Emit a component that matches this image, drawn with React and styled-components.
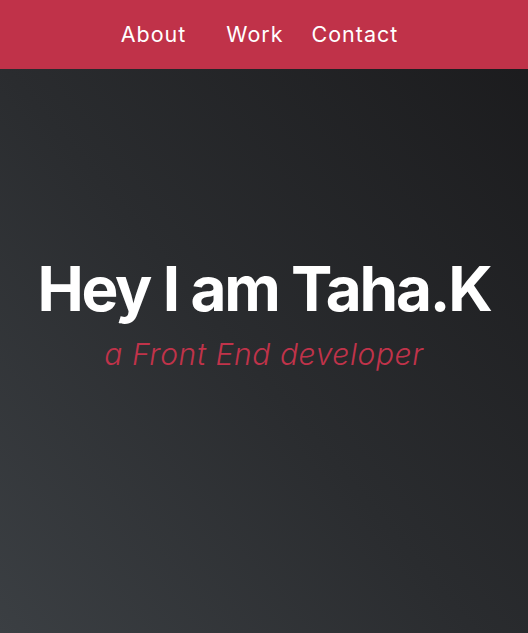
import React from 'react';
import styled, { createGlobalStyle } from 'styled-components';

const GlobalStyle = createGlobalStyle`
  * {
    box-sizing: border-box;
  }
  html, body {
    margin: 0;
    padding: 0;
    height: 100%;
  }
  body {
    font-family: Inter, "Noto Sans", sans-serif;
    background: #1b1c1d;
  }
`;

const links = [
  { label: 'About', wide: true },
  { label: 'Work' },
  { label: 'Contact' },
];

const App = () => {
  return (
    <>
      <GlobalStyle />
      <Header>
        <Nav>
          {links.map((link) => (
            <NavLink key={link.label} href="#" $wide={link.wide}>
              {link.label}
            </NavLink>
          ))}
        </Nav>
      </Header>
      <Hero>
        <Title>Hey I am Taha.K</Title>
        <Subtitle>a Front End developer</Subtitle>
      </Hero>
    </>
  );
};

const Header = styled.header`
  position: fixed;
  top: 0;
  left: 0;
  width: 100%;
  height: 69px;
  background: #c03249;
  display: flex;
  justify-content: center;
  align-items: center;
  z-index: 10;
`;

const Nav = styled.nav`
  display: flex;
  align-items: center;
  gap: 28px;
  margin-right: 9px;
  margin-bottom: 2px;
`;

const NavLink = styled.a`
  color: #ffffff;
  text-decoration: none;
  font-family: Inter, "Noto Sans", sans-serif;
  font-size: 21.5px;
  font-weight: 400;
  letter-spacing: 1px;
  margin-right: ${({ $wide }) => ($wide ? '12px' : '0')};
`;

const Hero = styled.section`
  height: 100vh;
  width: 100%;
  display: flex;
  flex-direction: column;
  justify-content: center;
  align-items: center;
  background: linear-gradient(to top right, #3b3f43 0%, #2a2c2f 45%, #1a1a1c 100%);
  padding-bottom: 6px;
`;

const Title = styled.h1`
  margin: 0;
  color: #ffffff;
  font-family: Inter, "Noto Sans", sans-serif;
  font-size: 62px;
  font-weight: 700;
  letter-spacing: -2.2px;
  line-height: 1.1;
`;

const Subtitle = styled.p`
  margin: 12px 0 0;
  color: #c0334a;
  font-family: Inter, "Noto Sans", sans-serif;
  font-size: 30px;
  font-weight: 300;
  font-style: italic;
  letter-spacing: 0.6px;
  line-height: 1.2;
`;

export default App;
